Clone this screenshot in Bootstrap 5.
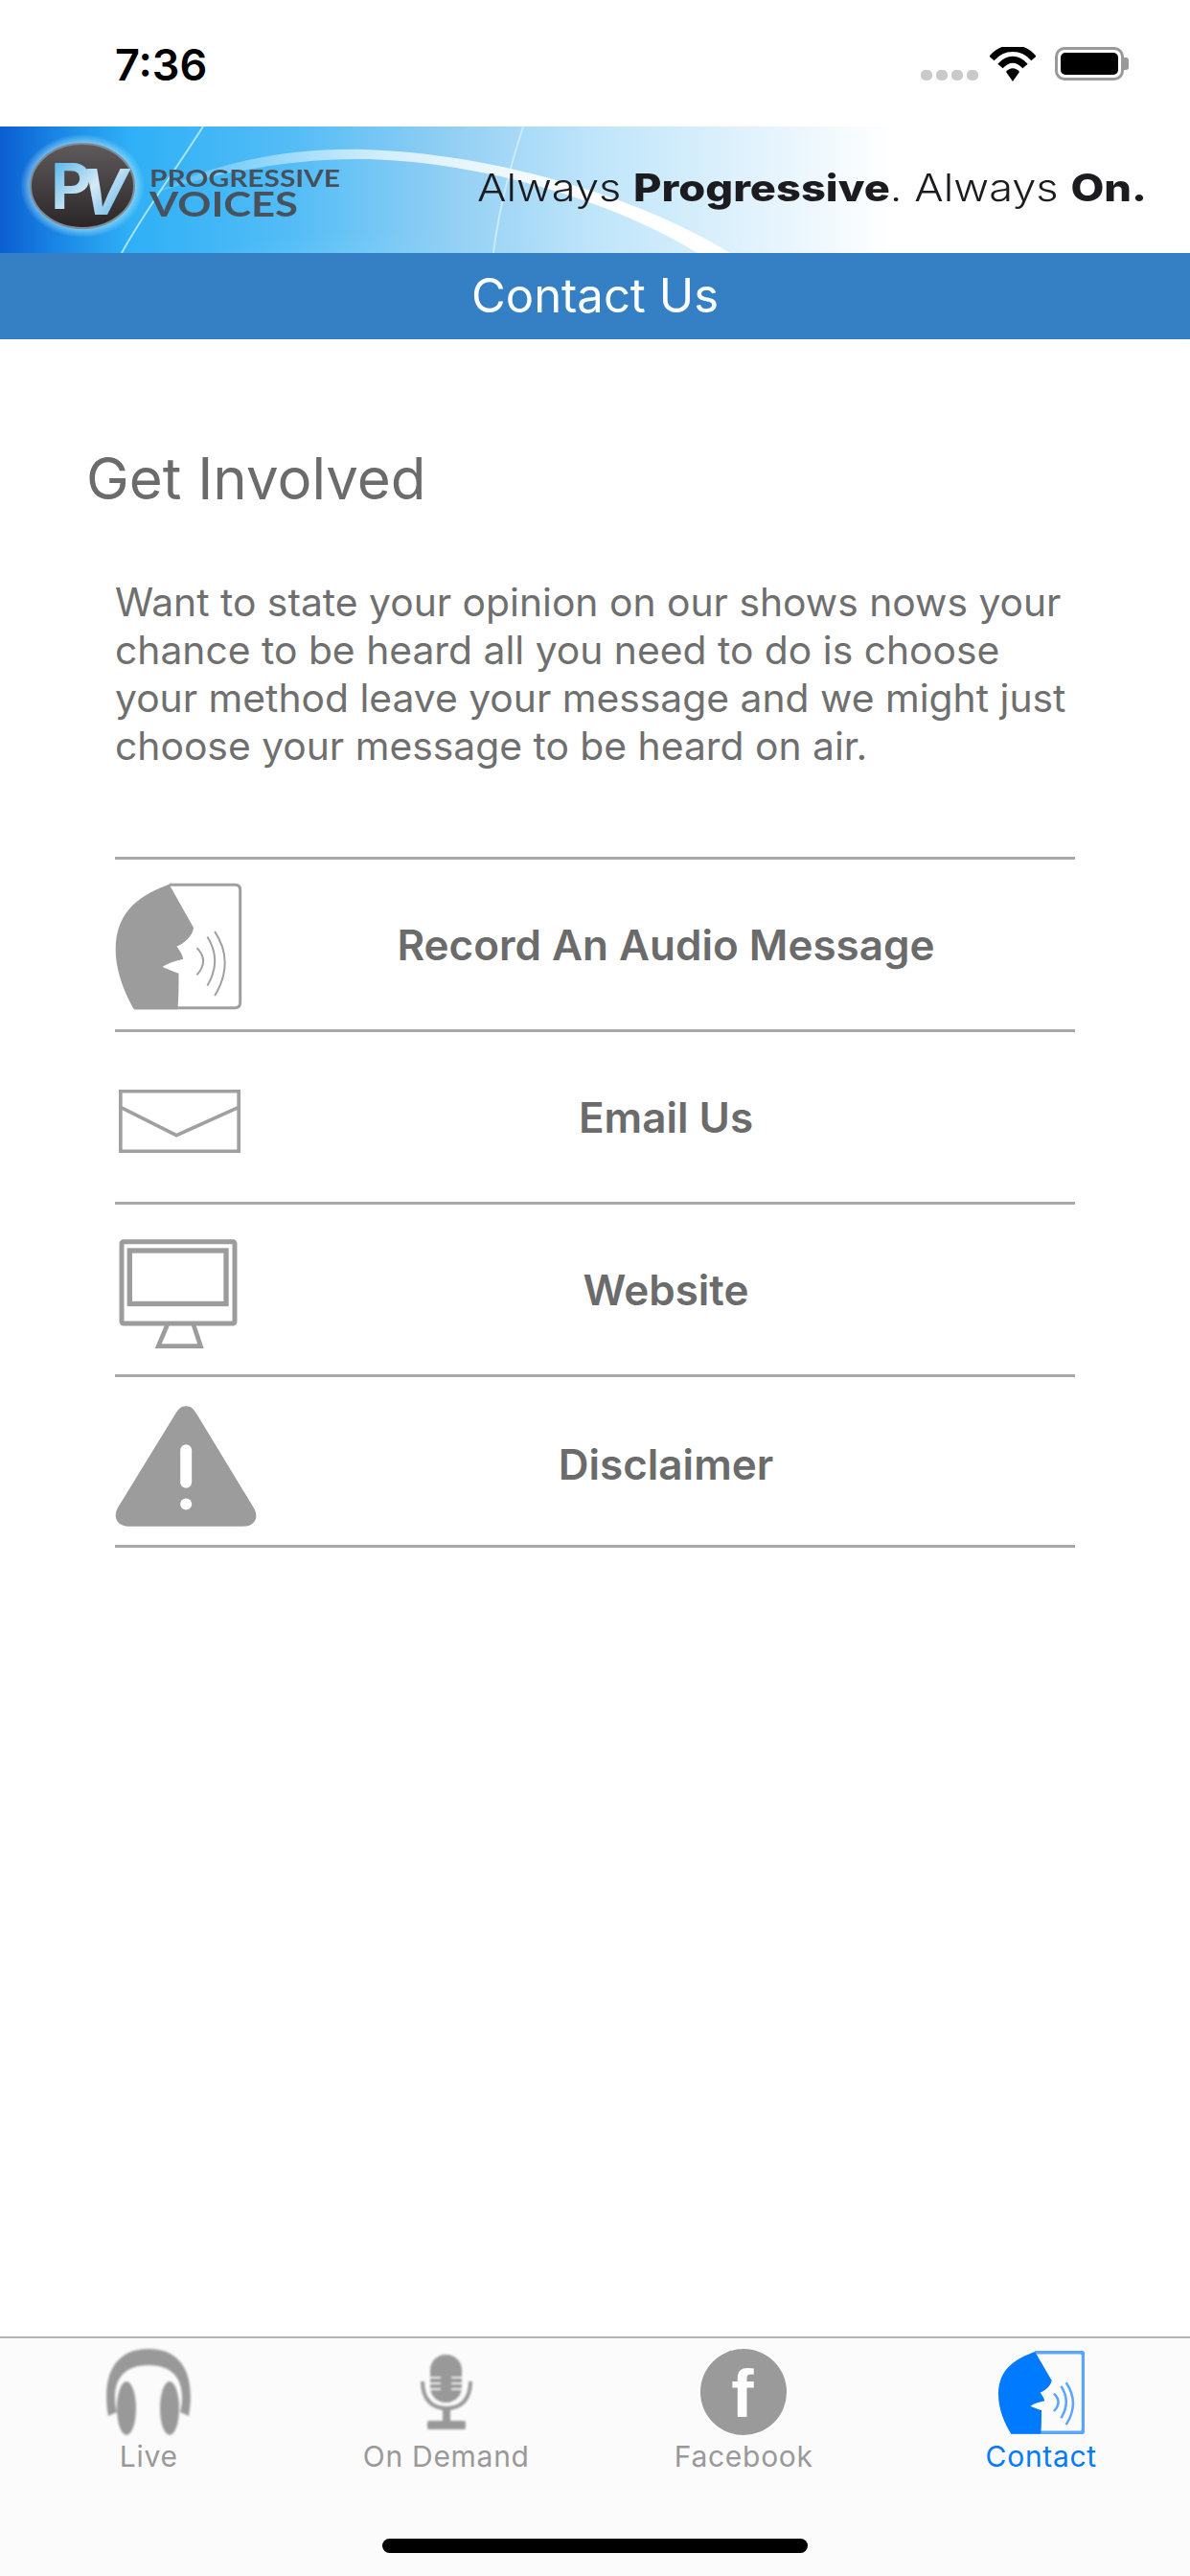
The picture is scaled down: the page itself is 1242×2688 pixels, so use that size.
<!DOCTYPE html>
<html lang="en">
<head>
  <meta charset="UTF-8">
  <title>Contact Us – Progressive Voices</title>
  <link href="https://cdn.jsdelivr.net/npm/bootstrap@5.3.0/dist/css/bootstrap.min.css" rel="stylesheet">
  <style>
    body { width: 1242px; min-height: 2688px; font-family: Inter, "Liberation Sans", sans-serif; color: #6b6b6b; background: #fff; }
    .status-strip { height: 132px; padding: 0 64px 0 120px; }
    .clock { font-size: 45px; font-weight: 600; color: #000; line-height: 1; margin-top: 2px; }
    .signal-dot { width: 12px; height: 11px; border-radius: 5px; background: #c9c9c9; margin-top: 24px; }
    .wifi-ico { margin: 2px 20px 0 -4px; }
    .batt { width: 72px; height: 35px; border: 3px solid #999; border-radius: 10px; padding: 3px; }
    .batt-fill { background: #000; border-radius: 5px; height: 100%; }
    .batt-nub { width: 5px; height: 13px; background: #999; border-radius: 0 3px 3px 0; }
    .banner-art { display: block; height: 132px; }
    .banner-ink { filter: blur(.6px); }
    .title-bar { height: 90px; background: #3580c4; color: #fff; font-size: 49px; line-height: 90px; }
    .page-body { padding: 109px 120px 0 90px; }
    .intro-title { font-size: 60px; font-weight: 400; line-height: 72px; margin: 0 0 68px; color: #6b6b6b; }
    .intro-text { font-size: 40.8px; line-height: 50px; margin: 0 0 91px 30px; width: 1012px; color: #6f6f6f; }
    .method-list { margin-left: 30px; border-bottom: 3px solid #a8a8a8; border-radius: 0; --bs-list-group-bg: transparent; }
    .method-row { height: 180px; padding: 0; border-top: 3px solid #a8a8a8 !important; border-bottom: 0; color: #6b6b6b; font-size: 44px; font-weight: 600; }
    .method-row:last-child { height: 178px; padding-top: 6px; }
    .method-ico { width: 148px; }
    .tab-strip { height: 250px; border-top: 2px solid #b4b4b4; background: #fbfbfb; padding-top: 11px; }
    .tab-ico { height: 90px; }
    .tab-name { font-size: 30px; letter-spacing: .7px; line-height: 36px; color: #999; margin-top: 4px; }
    .tab-name.on { color: #007aff; }
    .soft { filter: blur(1px); }
    .home-pill { left: 399px; bottom: 24px; width: 444px; height: 15px; border-radius: 8px; background: #000; }
  </style>
</head>
<body class="d-flex flex-column position-relative">

  <!-- status bar -->
  <div class="status-strip d-flex align-items-center justify-content-between">
    <div class="clock">7:36</div>
    <div class="d-flex align-items-center">
      <div class="d-flex gap-1 me-3">
        <div class="signal-dot"></div><div class="signal-dot"></div><div class="signal-dot"></div><div class="signal-dot"></div>
      </div>
      <svg class="wifi-ico" width="48" height="36" viewBox="0 0 48 36">
        <path d="M2 12 C14 -2 34 -2 46 12" fill="none" stroke="#000" stroke-width="7"/>
        <path d="M11 20 C19 11 29 11 37 20" fill="none" stroke="#000" stroke-width="7"/>
        <path d="M17 26 C21 21 27 21 31 26 L24 36Z" fill="#000"/>
      </svg>
      <div class="batt"><div class="batt-fill"></div></div>
      <div class="batt-nub"></div>
    </div>
  </div>

  <!-- banner -->
  <svg class="banner-art" width="1242" height="132" viewBox="0 0 1242 132">
    <defs>
      <linearGradient id="sky" x1="0" x2="1" y1="0" y2="0">
        <stop offset="0" stop-color="#0b5ed0"/>
        <stop offset="0.05" stop-color="#1a88e6"/>
        <stop offset="0.11" stop-color="#2fb0f6"/>
        <stop offset="0.25" stop-color="#55bdf6"/>
        <stop offset="0.38" stop-color="#93cff3"/>
        <stop offset="0.5" stop-color="#bfe5fa"/>
        <stop offset="0.65" stop-color="#e6f4fc"/>
        <stop offset="0.75" stop-color="#ffffff"/>
      </linearGradient>
      <radialGradient id="glow" cx="0.5" cy="1" r="0.6">
        <stop offset="0" stop-color="#7fe0ff" stop-opacity=".85"/>
        <stop offset="1" stop-color="#7fe0ff" stop-opacity="0"/>
      </radialGradient>
      <radialGradient id="halo" cx="0.5" cy="0.5" r="0.5">
        <stop offset="0.75" stop-color="#bdf0ff" stop-opacity=".8"/>
        <stop offset="1" stop-color="#bdf0ff" stop-opacity="0"/>
      </radialGradient>
      <linearGradient id="ball" x1="0" x2="0" y1="0" y2="1">
        <stop offset="0" stop-color="#5f5a5c"/>
        <stop offset="1" stop-color="#2a2627"/>
      </linearGradient>
      <linearGradient id="pvletter" x1="0" x2="1" y1="0" y2="1">
        <stop offset="0" stop-color="#38a9e6"/>
        <stop offset="0.5" stop-color="#d5e9f5"/>
        <stop offset="1" stop-color="#3aa6e6"/>
      </linearGradient>
      <linearGradient id="swoosh" x1="0" x2="1" y1="0" y2="0">
        <stop offset="0" stop-color="#dff6ff" stop-opacity=".15"/>
        <stop offset="0.4" stop-color="#f2fbff" stop-opacity=".75"/>
        <stop offset="0.8" stop-color="#ffffff"/>
      </linearGradient>
    </defs>
    <rect width="1242" height="132" fill="url(#sky)"/>
    <ellipse cx="400" cy="132" rx="280" ry="120" fill="url(#glow)"/>
    <path d="M212 0 C180 50 150 90 127 132" fill="none" stroke="#a9e4fb" stroke-width="2"/>
    <path d="M546 0 C530 50 520 90 515 132" fill="none" stroke="#c9ecfb" stroke-width="2"/>
    <path d="M160 70 C220 38 300 22 380 24 C510 28 660 70 762 132 L728 132 C640 78 500 36 380 34 C300 33 220 50 160 70Z" fill="url(#swoosh)"/>
    <ellipse cx="86" cy="62" rx="65" ry="54" fill="url(#halo)"/>
    <ellipse cx="86" cy="62" rx="54" ry="44" fill="url(#ball)" stroke="#7f8a92" stroke-width="2"/>
    <g class="banner-ink">
      <text x="53" y="86" font-family="Inter, sans-serif" font-size="66" font-weight="700" fill="url(#pvletter)">P<tspan font-style="italic" dx="-12" dy="6">V</tspan></text>
      <text font-family="Lato, sans-serif" font-weight="700"><tspan x="156" y="63" font-size="25" textLength="199" lengthAdjust="spacingAndGlyphs" fill="#46505c">PROGRESSIVE</tspan><tspan x="156" y="94" font-size="36" textLength="155" lengthAdjust="spacingAndGlyphs" fill="#48525c">VOICES</tspan></text>
      <text x="498" y="78" font-family="Inter, sans-serif" font-size="39" font-weight="300" textLength="699" lengthAdjust="spacingAndGlyphs" fill="#1c1c20">Always <tspan font-weight="800">Progressive</tspan>. Always <tspan font-weight="800">On.</tspan></text>
    </g>
  </svg>

  <!-- title -->
  <div class="title-bar text-center">Contact Us</div>

  <!-- content -->
  <div class="page-body">
    <h2 class="intro-title">Get Involved</h2>
    <p class="intro-text">Want to state your opinion on our shows nows your chance to be heard all you need to do is choose your method leave your message and we might just choose your message to be heard on air.</p>

    <div class="list-group list-group-flush method-list">
      <a href="#" class="list-group-item method-row d-flex align-items-center">
        <span class="method-ico d-flex">
          <svg class="mt-1" width="133" height="133" viewBox="60 120 396 400">
            <path d="M228 127 H435 Q451 127 451 143 V497 Q451 513 435 513 H118" fill="none" stroke="#a0a0a0" stroke-width="9"/>
            <path d="M228 125 C150 155 60 200 60 330 C60 400 90 470 118 518 L255 518 C258 480 258 440 258 405 C240 400 225 392 207 385 C225 372 250 365 272 360 C270 345 258 330 252 320 C275 310 300 290 305 262Z" fill="#9c9c9c"/>
            <path d="M315 325 Q355 365 315 410 M348 290 Q395 365 348 443 M371 273 Q435 370 371 475" fill="none" stroke="#a0a0a0" stroke-width="6"/>
          </svg>
        </span>
        <span class="flex-fill text-center">Record An Audio Message</span>
      </a>
      <a href="#" class="list-group-item method-row d-flex align-items-center">
        <span class="method-ico d-flex">
          <svg class="ms-1 mt-2" width="127" height="66" viewBox="67 770 380 198">
            <rect x="72" y="775" width="370" height="188" fill="none" stroke="#a0a0a0" stroke-width="11"/>
            <path d="M72 825 L247 913 L442 825" fill="none" stroke="#a0a0a0" stroke-width="11"/>
          </svg>
        </span>
        <span class="flex-fill text-center">Email Us</span>
      </a>
      <a href="#" class="list-group-item method-row d-flex align-items-center">
        <span class="method-ico d-flex">
          <svg class="ms-1 mt-2" width="124" height="114" viewBox="72 95 371 343">
            <rect x="80" y="103" width="355" height="257" rx="6" fill="none" stroke="#9c9c9c" stroke-width="15"/>
            <rect x="105" y="131" width="303" height="167" fill="none" stroke="#9c9c9c" stroke-width="16"/>
            <path d="M224 362 L195 431 H328 L305 362" fill="none" stroke="#9c9c9c" stroke-width="14"/>
          </svg>
        </span>
        <span class="flex-fill text-center">Website</span>
      </a>
      <a href="#" class="list-group-item method-row d-flex align-items-center">
        <span class="method-ico d-flex">
          <svg class="mt-1" width="148" height="126" viewBox="62 615 445 377">
            <path d="M285 615 C265 615 258 630 250 642 L70 935 C55 965 70 992 105 992 H465 C500 992 515 965 498 935 L320 642 C312 630 305 615 285 615Z" fill="#9c9c9c"/>
            <rect x="267" y="735" width="36" height="137" rx="18" fill="#fff"/>
            <circle cx="285" cy="922" r="18" fill="#fff"/>
          </svg>
        </span>
        <span class="flex-fill text-center">Disclaimer</span>
      </a>
    </div>
  </div>

  <!-- tab bar -->
  <div class="tab-strip mt-auto row g-0">
    <div class="col-3 d-flex flex-column align-items-center">
      <div class="tab-ico d-flex align-items-center">
        <svg class="soft" width="90" height="90" viewBox="0 0 90 90">
          <path d="M3 70 C-4 30 8 0 45 0 C82 0 94 30 87 70 L78 66 C84 42 78 17 45 17 C12 17 6 42 12 66Z" fill="#999"/>
          <ellipse cx="22" cy="62" rx="10" ry="28" fill="#999"/>
          <ellipse cx="67" cy="62" rx="10" ry="28" fill="#999"/>
        </svg>
      </div>
      <div class="tab-name">Live</div>
    </div>
    <div class="col-3 d-flex flex-column align-items-center">
      <div class="tab-ico d-flex align-items-center">
        <svg class="soft" width="56" height="78" viewBox="0 0 56 78">
          <rect x="11" y="0" width="33" height="50" rx="16" fill="#999"/>
          <path d="M11 24 H22 M11 30 H22 M11 36 H22 M33 24 H44 M33 30 H44 M33 36 H44" stroke="#eee" stroke-width="2"/>
          <path d="M3 28 C3 48 14 56 28 56 C42 56 53 48 53 28" fill="none" stroke="#999" stroke-width="4"/>
          <rect x="24" y="56" width="8" height="14" fill="#999"/>
          <rect x="8" y="69" width="40" height="9" rx="2" fill="#999"/>
        </svg>
      </div>
      <div class="tab-name">On Demand</div>
    </div>
    <div class="col-3 d-flex flex-column align-items-center">
      <div class="tab-ico d-flex align-items-center">
        <svg width="90" height="90" viewBox="0 0 90 90">
          <circle cx="45" cy="45" r="45" fill="#9a9a9a"/>
          <text x="44" y="71" text-anchor="middle" font-family="Liberation Sans, sans-serif" font-size="70" font-weight="700" fill="#fff">f</text>
        </svg>
      </div>
      <div class="tab-name">Facebook</div>
    </div>
    <div class="col-3 d-flex flex-column align-items-center">
      <div class="tab-ico d-flex align-items-center">
        <svg width="90" height="87" viewBox="60 120 396 400" preserveAspectRatio="none">
          <path d="M228 127 H435 Q451 127 451 143 V497 Q451 513 435 513 H118" fill="none" stroke="#5aa5ff" stroke-width="18"/>
          <path d="M228 125 C150 155 60 200 60 330 C60 400 90 470 118 518 L255 518 C258 480 258 440 258 405 C240 400 225 392 207 385 C225 372 250 365 272 360 C270 345 258 330 252 320 C275 310 300 290 305 262Z" fill="#007aff"/>
          <path d="M315 325 Q355 365 315 410 M348 290 Q395 365 348 443 M371 273 Q435 370 371 475" fill="none" stroke="#5aa5ff" stroke-width="11"/>
        </svg>
      </div>
      <div class="tab-name on">Contact</div>
    </div>
  </div>
  <div class="home-pill position-absolute"></div>

  <script src="https://cdn.jsdelivr.net/npm/bootstrap@5.3.0/dist/js/bootstrap.bundle.min.js"></script>
</body>
</html>
